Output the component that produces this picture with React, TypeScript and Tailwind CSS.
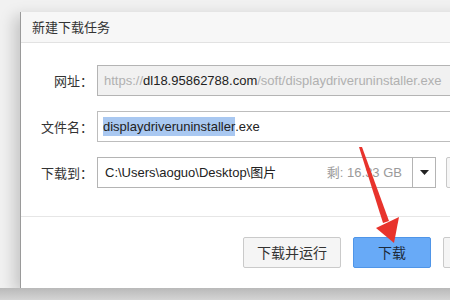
// New download task dialog (下载任务) with a red pointer arrow over the "下载" button.

const FONT = "font-['Microsoft_YaHei','Noto_Sans_CJK_SC','Noto_Sans',sans-serif]";
const FIELD = "font-['Liberation_Sans','Noto_Sans_CJK_SC',sans-serif] text-[13px]";

function Label({ text }: { text: string }) {
  return <div className="w-[72px] shrink-0 text-right text-[13px] text-[#333]">{text}</div>;
}

export default function App() {
  return (
    <div className={`relative flex h-[300px] w-[450px] flex-col overflow-hidden bg-[#f1f1f1] ${FONT}`}>
      <div className="h-[12px] shrink-0" />

      <div className="flex shrink-0 pl-[20px]">
        <div className="flex h-[276px] w-[470px] shrink-0 flex-col border-l border-[#9a9a9a] bg-white shadow-[-6px_4px_14px_rgba(0,0,0,0.18)]">
          {/* title bar */}
          <div className="flex h-[31px] shrink-0 items-center border-b border-[#e2e2e2] bg-[#f7f7f7] pl-[11px] text-[13px] text-[#333]">
            新建下载任务
          </div>

          {/* form */}
          <div className="flex flex-col gap-[15px] pt-[22px]">
            <div className="flex items-center gap-[4px]">
              <Label text="网址：" />
              <div className={`flex h-[31px] flex-1 items-center whitespace-nowrap border border-[#b4b4b4] bg-[#f1f1f1] pl-[6px] ${FIELD}`}>
                <span className="text-[#b0b0b0]">https://</span>
                <span className="text-[#222]">dl18.95862788.com</span>
                <span className="text-[#b0b0b0]">/soft/displaydriveruninstaller.exe</span>
              </div>
            </div>

            <div className="flex items-center gap-[4px]">
              <Label text="文件名：" />
              <div className={`flex h-[31px] flex-1 items-center whitespace-nowrap border border-[#bdbdbd] bg-white pl-[5px] text-[#222] ${FIELD}`}>
                <span className="bg-[#a9c8f1] leading-[19px]">displaydriveruninstaller</span>
                <span>.exe</span>
              </div>
            </div>

            <div className="flex items-center gap-[4px]">
              <Label text="下载到：" />
              <div className={`flex h-[31px] w-[339px] shrink-0 items-center border border-[#b4b4b4] bg-white ${FIELD}`}>
                <span className="flex-1 whitespace-nowrap pl-[7px] text-[#222]">C:\Users\aoguo\Desktop\图片</span>
                <span className="whitespace-nowrap pr-[10px] text-[#9a9a9a]">剩: 16.33 GB</span>
                <div className="flex h-full w-[23px] items-center justify-center border-l border-[#b4b4b4]">
                  <svg width="9" height="5" viewBox="0 0 9 5">
                    <path d="M0 0h9L4.5 5z" fill="#222" />
                  </svg>
                </div>
              </div>
              <div className="ml-[6px] h-[31px] w-[40px] shrink-0 rounded-[2px] border border-[#c8c8c8] bg-[#f6f6f6]" />
            </div>
          </div>

          {/* footer */}
          <div className="mt-[28px] border-t border-[#e6e6e6]" />
          <div className="flex gap-[12px] pl-[222px] pt-[20px]">
            <button className="h-[31px] w-[98px] shrink-0 rounded-[2px] border border-[#cacaca] bg-[#f5f5f5] text-[14px] text-[#333]">
              下载并运行
            </button>
            <button className="h-[31px] w-[78px] shrink-0 rounded-[2px] border border-[#4f95e8] bg-[#68aaf7] text-[14px] text-[#1e2a3a]">
              下载
            </button>
            <button className="h-[31px] w-[60px] shrink-0 rounded-[2px] border border-[#cacaca] bg-[#f5f5f5]" />
          </div>
        </div>
      </div>

      <div className="flex-1 bg-gradient-to-b from-[#b9b9b9] to-[#d4d4d4]" />

      {/* red annotation arrow */}
      <svg className="pointer-events-none absolute left-0 top-0" width="450" height="300" viewBox="0 0 450 300">
        <path d="M359 147 L362 147 L389 221 L383 223 Z" fill="#e8332c" />
        <path d="M376 228 L399 217 L394 243 Z" fill="#e8332c" />
      </svg>
    </div>
  );
}
